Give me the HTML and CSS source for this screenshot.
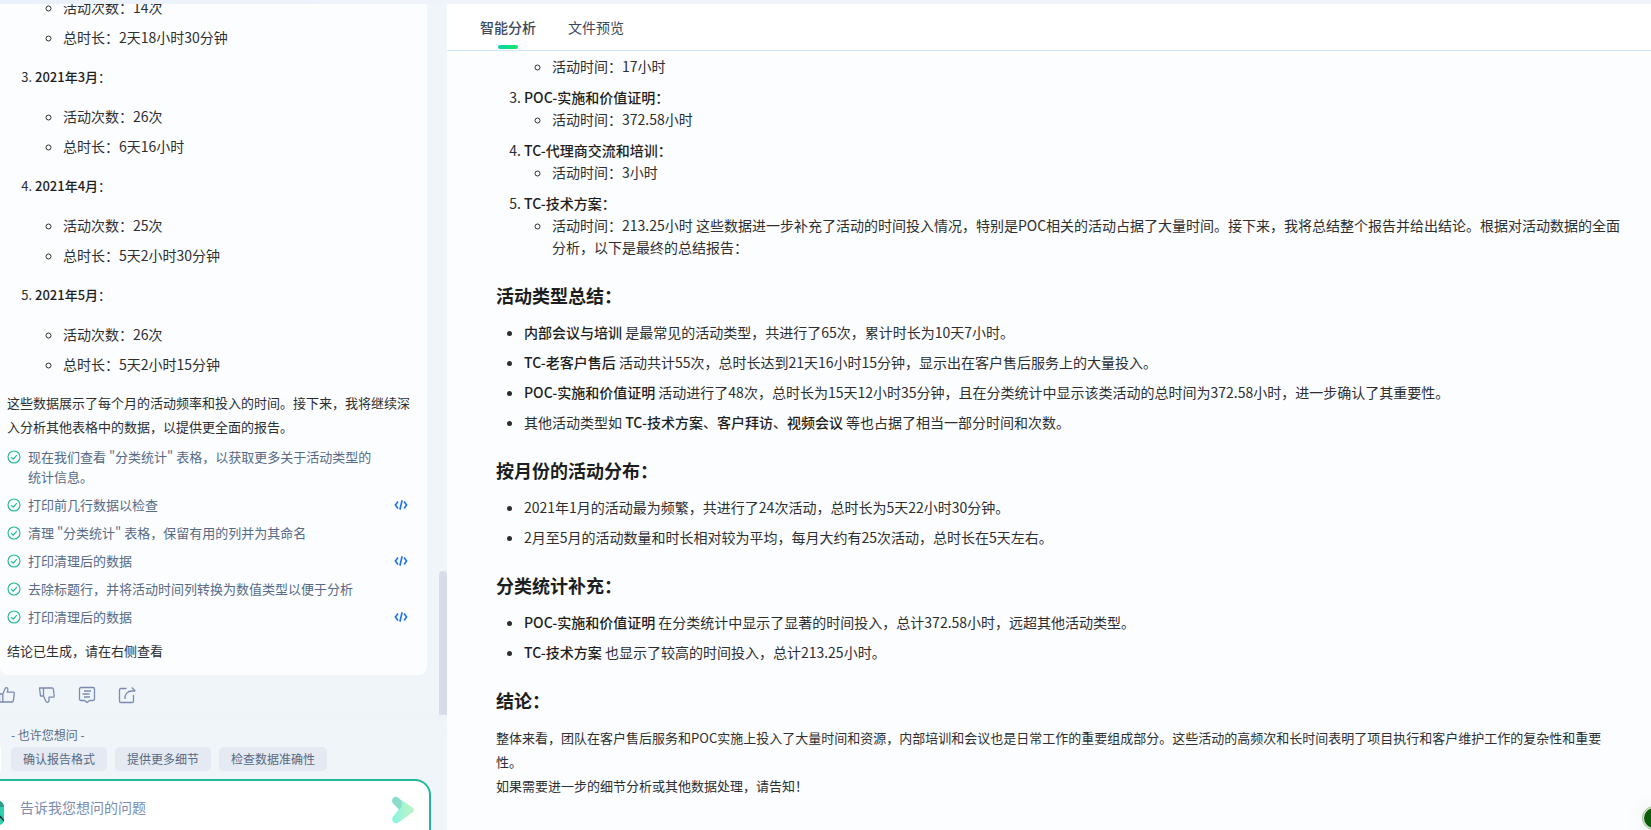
FILE: index.html
```html
<!DOCTYPE html>
<html lang="zh-CN">
<head>
<meta charset="utf-8">
<title>智能分析</title>
<link rel="stylesheet" href="styles.css">
</head>
<body>
<svg class="sprite" aria-hidden="true">
  <symbol id="check" viewBox="0 0 14 14"><circle cx="7" cy="7" r="6" fill="none" stroke="currentColor" stroke-width="1.1"/><path d="M4.3 7.2l2 1.9 3.5-3.9" fill="none" stroke="currentColor" stroke-width="1.2"/></symbol>
  <symbol id="code" viewBox="0 0 14 12"><path d="M4 2.6L1.4 6 4 9.4M10 2.6L12.6 6 10 9.4M8.1 1.2L5.9 10.8" fill="none" stroke="currentColor" stroke-width="1.6"/></symbol>
</svg>
<div class="app">
  <aside class="chat">
    <div class="history">
      <div class="card">
        <ol class="months" start="2">
          <li><strong>2021年2月</strong>：
            <ul><li>活动次数：14次</li><li>总时长：2天18小时30分钟</li></ul></li>
          <li><strong>2021年3月</strong>：
            <ul><li>活动次数：26次</li><li>总时长：6天16小时</li></ul></li>
          <li><strong>2021年4月</strong>：
            <ul><li>活动次数：25次</li><li>总时长：5天2小时30分钟</li></ul></li>
          <li><strong>2021年5月</strong>：
            <ul><li>活动次数：26次</li><li>总时长：5天2小时15分钟</li></ul></li>
        </ol>
        <p class="note">这些数据展示了每个月的活动频率和投入的时间。接下来，我将继续深入分析其他表格中的数据，以提供更全面的报告。</p>
        <ul class="steps">
          <li><svg class="ok"><use href="#check"/></svg><span>现在我们查看 "分类统计" 表格，以获取更多关于活动类型的统计信息。</span></li>
          <li><svg class="ok"><use href="#check"/></svg><span>打印前几行数据以检查</span><button class="code" aria-label="查看代码"><svg><use href="#code"/></svg></button></li>
          <li><svg class="ok"><use href="#check"/></svg><span>清理 "分类统计" 表格，保留有用的列并为其命名</span></li>
          <li><svg class="ok"><use href="#check"/></svg><span>打印清理后的数据</span><button class="code" aria-label="查看代码"><svg><use href="#code"/></svg></button></li>
          <li><svg class="ok"><use href="#check"/></svg><span>去除标题行，并将活动时间列转换为数值类型以便于分析</span></li>
          <li><svg class="ok"><use href="#check"/></svg><span>打印清理后的数据</span><button class="code" aria-label="查看代码"><svg><use href="#code"/></svg></button></li>
        </ul>
        <p class="note done">结论已生成，请在右侧查看</p>
      </div>
      <div class="actions">
        <button aria-label="赞"><svg viewBox="0 0 18 18"><path d="M1.5 8h3.300v8H1.500zM4.800 8l2.400-5.500c.3-.7.8-1 1.400-.8.900.2 1.300.8 1.200 1.700L9.400 6.200h5.800c.8 0 1.300.6 1.100 1.400l-1 7.200c-.1.700-.6 1.200-1.300 1.200H4.800"/></svg></button>
        <button aria-label="踩"><svg viewBox="0 0 18 18"><path d="M1.500 2h4v8H2.500zM5.500 2h8.700c.6 0 1 .4 1.100 1l.9 7c0 .7-.4 1.200-1.100 1.200H11v3.300c0 1.100-.7 1.800-1.900 1.800-.6 0-.9-.3-1.100-.9L5.500 10"/></svg></button>
        <button aria-label="评论"><svg viewBox="0 0 18 18"><path d="M3 1.500h12c.9 0 1.500.6 1.500 1.500v10c0 .9-.6 1.500-1.500 1.500h-3.400L9 16.500l-2.600-2H3c-.9 0-1.500-.6-1.500-1.500V3c0-.9.600-1.500 1.500-1.500zM6 5h7M4.500 8h7M6 11h6"/></svg></button>
        <button aria-label="分享"><svg viewBox="0 0 18 18"><path d="M8.500 2.500H2.800c-.7 0-1.300.6-1.300 1.300v11.400c0 .7.600 1.300 1.300 1.300h11.400c.7 0 1.300-.6 1.300-1.300V9M7 13c-.3-5 2.500-8 7-8h3.300M13.800 1.500L17.300 5"/></svg></button>
      </div>
      <i class="thumb"></i>
    </div>
    <div class="composer">
      <p class="hint">- 也许您想问 -</p>
      <div class="chips">
        <i class="edge"></i>
        <button>确认报告格式</button>
        <button>提供更多细节</button>
        <button>检查数据准确性</button>
      </div>
      <div class="ask">
        <svg class="bot" viewBox="0 0 4 24"><path d="M0 0c2 1 4 3 4 6v13c0 3-2 4-4 5z" fill="#2fcfae"/><path d="M0 0c2 1 4 3 4 6H0z" fill="#2a9c86"/><path d="M0 15l4 5" stroke="#0b3d3a" stroke-width="1.5"/></svg>
        <input type="text" aria-label="问题" placeholder="告诉我您想问的问题">
        <button class="send" aria-label="发送"><svg viewBox="0 0 24 28"><defs><linearGradient id="g" x1="0" x2="1"><stop offset="0" stop-color="#86f3e4"/><stop offset=".75" stop-color="#b4f5c8"/></linearGradient></defs><path d="M7.500 2L22 12c1.300 1 1.300 3 0 4L7.500 26.500c-4 2.500-8-2-5.500-5.500L8 13 2 7C-.5 3 3.500-.5 7.500 2z" fill="url(#g)"/><path d="M7.500 2l2.500 3c1.500 3 .5 6-1.500 9L2 7.500C-.5 3.500 3.500-1.500 7.500 2z" fill="#8bdccb"/></svg></button>
      </div>
    </div>
  </aside>
  <main class="report">
    <nav class="tabs"><button class="on">智能分析</button><button>文件预览</button></nav>
    <article class="doc">
      <ul class="sub lead"><li>活动时间：17小时</li></ul>
      <ol class="kinds" start="3">
        <li><strong>POC-实施和价值证明：</strong><ul class="sub"><li>活动时间：372.58小时</li></ul></li>
        <li><strong>TC-代理商交流和培训：</strong><ul class="sub"><li>活动时间：3小时</li></ul></li>
        <li><strong>TC-技术方案：</strong><ul class="sub"><li>活动时间：213.25小时 这些数据进一步补充了活动的时间投入情况，特别是POC相关的活动占据了大量时间。接下来，我将总结整个报告并给出结论。根据对活动数据的全面分析，以下是最终的总结报告：</li></ul></li>
      </ol>
      <h3>活动类型总结：</h3>
      <ul class="points">
        <li><strong>内部会议与培训</strong> 是最常见的活动类型，共进行了65次，累计时长为10天7小时。</li>
        <li><strong>TC-老客户售后</strong> 活动共计55次，总时长达到21天16小时15分钟，显示出在客户售后服务上的大量投入。</li>
        <li><strong>POC-实施和价值证明</strong> 活动进行了48次，总时长为15天12小时35分钟，且在分类统计中显示该类活动的总时间为372.58小时，进一步确认了其重要性。</li>
        <li>其他活动类型如 <strong>TC-技术方案</strong>、<strong>客户拜访</strong>、<strong>视频会议</strong> 等也占据了相当一部分时间和次数。</li>
      </ul>
      <h3>按月份的活动分布：</h3>
      <ul class="points">
        <li>2021年1月的活动最为频繁，共进行了24次活动，总时长为5天22小时30分钟。</li>
        <li>2月至5月的活动数量和时长相对较为平均，每月大约有25次活动，总时长在5天左右。</li>
      </ul>
      <h3>分类统计补充：</h3>
      <ul class="points">
        <li><strong>POC-实施和价值证明</strong> 在分类统计中显示了显著的时间投入，总计372.58小时，远超其他活动类型。</li>
        <li><strong>TC-技术方案</strong> 也显示了较高的时间投入，总计213.25小时。</li>
      </ul>
      <h3>结论：</h3>
      <p>整体来看，团队在客户售后服务和POC实施上投入了大量时间和资源，内部培训和会议也是日常工作的重要组成部分。这些活动的高频次和长时间表明了项目执行和客户维护工作的复杂性和重要性。<br>如果需要进一步的细节分析或其他数据处理，请告知！</p>
    </article>
    <button class="float" aria-label="助手"></button>
  </main>
</div>
</body>
</html>
```
FILE: styles.css
```css
* { box-sizing: border-box; }
body { margin: 0; font: 14px/22px "Noto Sans CJK SC", sans-serif; color: #2c2e30; background: #f0f5fa; }
ul, ol, p, h3 { margin: 0; padding: 0; }
strong { font-weight: 500; color: #1c1e20; }
button { font: inherit; color: inherit; border: 0; background: none; padding: 0; cursor: pointer; }
svg { display: block; }
.sprite { position: absolute; width: 0; height: 0; }
.app { display: flex; height: 100vh; padding-top: 4px; overflow: hidden; background: linear-gradient(90deg, #e9f1fa, #f1f3fa 30%); }

.chat { flex: none; width: 447px; display: flex; flex-direction: column; background: #f0f5fa; }
.history { position: relative; flex: 1; min-height: 0; display: flex; flex-direction: column; justify-content: flex-end; overflow: hidden; }
.card { flex: none; margin-right: 20px; padding: 0 16px 12px 7px; border-radius: 0 0 8px 8px; background: #fcfdff; font-size: 13px; }
.months { display: grid; gap: 18px; margin-bottom: 16px; padding-left: 28px; }
.months ul { margin-top: 17px; padding-left: 28px; list-style: circle; font-size: 14px; }
.months ul li + li { margin-top: 8px; }
.note { line-height: 24px; }
.steps { list-style: none; display: flex; flex-direction: column; gap: 8px; margin-top: 8px; line-height: 20px; color: #566a85; }
.steps li { display: flex; }
.steps span { flex: 1; padding-right: 32px; }
.ok { flex: none; width: 14px; height: 14px; margin: 3px 7px 0 0; color: #1cb996; }
.steps .code { height: 20px; padding: 0 3px; color: #1c72f2; }
.code svg { width: 14px; height: 12px; }
.done { margin-top: 12px; }
.actions { flex: none; display: flex; gap: 22px; height: 40px; margin-left: -2px; align-items: center; }
.actions svg { width: 18px; height: 18px; fill: none; stroke: #7b8bb0; stroke-width: 1.3; stroke-linejoin: round; }
.thumb { position: absolute; right: 0; bottom: 0; width: 8px; height: 144px; border-radius: 4px 4px 0 0; background: #d7dce8; }
.composer { flex: none; padding-top: 9px; background: linear-gradient(#eef4f9, #f0f5fa 16px); color: #566a85; font-size: 12px; }
.hint { padding-left: 11px; }
.chips { display: flex; gap: 8px; padding-top: 1px; }
.chips .edge { width: 1px; margin-right: 2px; background: #fff; }
.chips button { height: 24px; padding: 0 12px; border-radius: 5px; line-height: 24px; background: #e4e9f2; }
.ask { display: flex; align-items: center; height: 51px; margin: 8px 16px 0 0; border: solid #1fb898; border-width: 2px 2px 0 0; border-top-right-radius: 16px; background: #fff; }
.bot { width: 4px; height: 24px; margin-top: 14px; }
.ask input { flex: 1; min-width: 0; margin-top: 2px; padding: 0 16px; border: 0; outline: 0; background: none; font: inherit; font-size: 14px; line-height: 22px; }
.ask input::placeholder { color: #7b8db0; }
.send svg { width: 24px; height: 28px; margin: 8px 14px 0 0; }

.report { position: relative; flex: 1; min-width: 0; background: #fcfdff; }
.tabs { display: flex; gap: 32px; height: 47px; padding-left: 33px; border-bottom: 1px solid #d6e5f2; background: #fff; color: #3d4a5c; }
.tabs .on { position: relative; font-weight: 500; }
.tabs .on::after { content: ""; position: absolute; left: 50%; bottom: 1px; width: 20px; height: 4px; margin-left: -10px; border-radius: 2px; background: linear-gradient(90deg, #0bd3a8, #12e86a); }
.doc { padding: 4px 27px 0 49px; }
.sub { padding-left: 28px; list-style: circle; }
.lead { margin: 0 0 9px 28px; }
.kinds, .points { padding-left: 28px; }
.kinds > li + li { margin-top: 9px; }
.points li + li { margin-top: 8px; }
.doc h3 { margin: 23px 0 12px; font-size: 18px; line-height: 28px; font-weight: 700; color: #1c1e20; }
.doc p { font-size: 13px; line-height: 24px; }
.float { position: absolute; right: -15px; bottom: 0; width: 24px; height: 24px; border: 2px solid #dfe8d8; border-radius: 50%; outline: 1px solid #a5bf9c; outline-offset: -1px; background: #0a5c0a; box-shadow: 0 0 24px #0001; }
```
